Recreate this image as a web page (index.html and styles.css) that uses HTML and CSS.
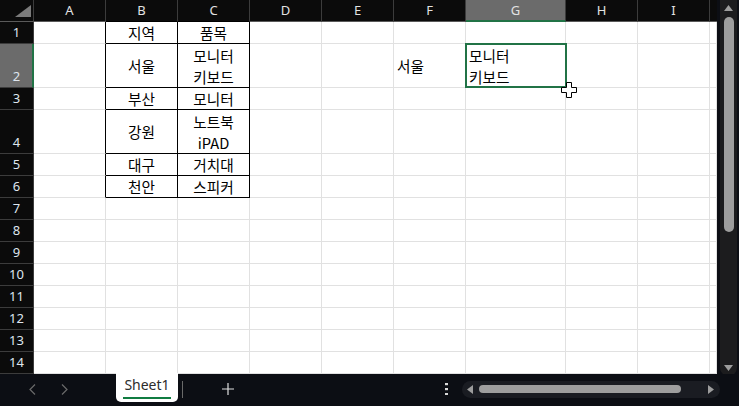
FILE: index.html
```html
<!DOCTYPE html>
<html lang="ko">
<head>
<meta charset="utf-8">
<title>Sheet1</title>
<link rel="stylesheet" href="styles.css">
</head>
<body>
<div class="app">
  <div class="top">
    <div class="sheet">
      <div class="hdr corner"><svg width="16" height="12" viewBox="0 0 16 12"><polygon points="16,0 16,12 0,12" fill="#7b7b7b"/></svg></div>
      <div class="hdr">A</div>
      <div class="hdr th">B</div>
      <div class="hdr th">C</div>
      <div class="hdr">D</div>
      <div class="hdr">E</div>
      <div class="hdr">F</div>
      <div class="hdr hsel">G</div>
      <div class="hdr">H</div>
      <div class="hdr">I</div>
      <div class="hdr last"></div>

      <div class="rh">1</div>
      <div class="c tl"></div><div class="c t">지역</div><div class="c t">품목</div><div class="c"></div><div class="c"></div><div class="c"></div><div class="c"></div><div class="c"></div><div class="c"></div><div class="c"></div>

      <div class="rh rsel">2</div>
      <div class="c tl"></div><div class="c t">서울</div><div class="c t wrap">모니터<br>키보드</div><div class="c"></div><div class="c"></div><div class="c left">서울</div><div class="c sel"><div class="seltext">모니터<br>키보드</div><span class="selbox"></span></div><div class="c"></div><div class="c"></div><div class="c"></div>

      <div class="rh">3</div>
      <div class="c tl"></div><div class="c t">부산</div><div class="c t">모니터</div><div class="c"></div><div class="c"></div><div class="c"></div><div class="c"></div><div class="c"></div><div class="c"></div><div class="c"></div>

      <div class="rh">4</div>
      <div class="c tl"></div><div class="c t">강원</div><div class="c t wrap">노트북<br>iPAD</div><div class="c"></div><div class="c"></div><div class="c"></div><div class="c"></div><div class="c"></div><div class="c"></div><div class="c"></div>

      <div class="rh">5</div>
      <div class="c tl"></div><div class="c t">대구</div><div class="c t">거치대</div><div class="c"></div><div class="c"></div><div class="c"></div><div class="c"></div><div class="c"></div><div class="c"></div><div class="c"></div>

      <div class="rh">6</div>
      <div class="c tl"></div><div class="c t">천안</div><div class="c t">스피커</div><div class="c"></div><div class="c"></div><div class="c"></div><div class="c"></div><div class="c"></div><div class="c"></div><div class="c"></div>

      <div class="rh">7</div>
      <div class="c"></div><div class="c"></div><div class="c"></div><div class="c"></div><div class="c"></div><div class="c"></div><div class="c"></div><div class="c"></div><div class="c"></div><div class="c"></div>
      <div class="rh">8</div>
      <div class="c"></div><div class="c"></div><div class="c"></div><div class="c"></div><div class="c"></div><div class="c"></div><div class="c"></div><div class="c"></div><div class="c"></div><div class="c"></div>
      <div class="rh">9</div>
      <div class="c"></div><div class="c"></div><div class="c"></div><div class="c"></div><div class="c"></div><div class="c"></div><div class="c"></div><div class="c"></div><div class="c"></div><div class="c"></div>
      <div class="rh">10</div>
      <div class="c"></div><div class="c"></div><div class="c"></div><div class="c"></div><div class="c"></div><div class="c"></div><div class="c"></div><div class="c"></div><div class="c"></div><div class="c"></div>
      <div class="rh">11</div>
      <div class="c"></div><div class="c"></div><div class="c"></div><div class="c"></div><div class="c"></div><div class="c"></div><div class="c"></div><div class="c"></div><div class="c"></div><div class="c"></div>
      <div class="rh">12</div>
      <div class="c"></div><div class="c"></div><div class="c"></div><div class="c"></div><div class="c"></div><div class="c"></div><div class="c"></div><div class="c"></div><div class="c"></div><div class="c"></div>
      <div class="rh">13</div>
      <div class="c"></div><div class="c"></div><div class="c"></div><div class="c"></div><div class="c"></div><div class="c"></div><div class="c"></div><div class="c"></div><div class="c"></div><div class="c"></div>
      <div class="rh">14</div>
      <div class="c"></div><div class="c"></div><div class="c"></div><div class="c"></div><div class="c"></div><div class="c"></div><div class="c"></div><div class="c"></div><div class="c"></div><div class="c"></div>

      <svg class="cursor" width="17" height="17" viewBox="0 0 17 17"><polygon points="5.5,0.5 10.5,0.5 10.5,5.5 15.5,5.5 15.5,10.5 10.5,10.5 10.5,15.5 5.5,15.5 5.5,10.5 0.5,10.5 0.5,5.5 5.5,5.5" fill="#fff" stroke="#000" stroke-width="1"/></svg>
    </div>
    <div class="vscroll">
      <div class="vtrack">
        <svg class="varrow" width="9" height="6" viewBox="0 0 9 6"><polygon points="4.5,0 9,6 0,6" fill="#9d9d9d"/></svg>
        <div class="vthumb"></div>
        <div class="grow"></div>
        <svg class="varrow" width="9" height="6" viewBox="0 0 9 6"><polygon points="0,0 9,0 4.5,6" fill="#9d9d9d"/></svg>
      </div>
    </div>
  </div>
  <div class="bottom">
    <div class="nav">
      <div class="navbtn"><svg width="7" height="11" viewBox="0 0 7 11"><polyline points="6,0.5 1,5.5 6,10.5" fill="none" stroke="#6a6a6a" stroke-width="1.2"/></svg></div>
      <div class="navbtn"><svg width="7" height="11" viewBox="0 0 7 11"><polyline points="1,0.5 6,5.5 1,10.5" fill="none" stroke="#6a6a6a" stroke-width="1.2"/></svg></div>
    </div>
    <div class="tab"><span class="tabtext">Sheet1</span></div>
    <div class="sep"></div>
    <div class="plus"><svg width="12" height="12" viewBox="0 0 12 12"><path d="M6 0V12M0 6H12" stroke="#e0e0e0" stroke-width="1.2"/></svg></div>
    <div class="grow"></div>
    <div class="dots"><svg width="3" height="12" viewBox="0 0 3 12"><rect x="0" y="0" width="3" height="2.2" fill="#d8d8d8"/><rect x="0" y="5" width="3" height="2.2" fill="#d8d8d8"/><rect x="0" y="10" width="3" height="2" fill="#d8d8d8"/></svg></div>
    <div class="hscroll">
      <svg width="6" height="9" viewBox="0 0 6 9"><polygon points="6,0 6,9 0,4.5" fill="#9d9d9d"/></svg>
      <div class="hthumb"></div>
      <div class="grow"></div>
      <svg width="6" height="9" viewBox="0 0 6 9"><polygon points="0,0 6,4.5 0,9" fill="#9d9d9d"/></svg>
    </div>
  </div>
</div>
</body>
</html>
```
FILE: styles.css
```css
* { box-sizing: border-box; }
html, body { margin: 0; padding: 0; }
body {
  width: 739px;
  height: 406px;
  overflow: hidden;
  background: #0c0e14;
  font-family: "Noto Sans CJK KR", "Noto Sans", sans-serif;
}
.app {
  display: flex;
  flex-direction: column;
  height: 406px;
}
.top {
  display: flex;
  height: 374px;
}
.sheet {
  position: relative;
  width: 717px;
  display: grid;
  grid-template-columns: 34px repeat(6, 72px) 100px 72px 72px 7px;
  grid-template-rows: 22px 22px 44px 22px 44px repeat(9, 22px);
  background: #fff;
  overflow: hidden;
}
.hdr {
  background: #0b0b0b;
  color: #e2e2e2;
  font-family: "Noto Sans", "Open Sans", sans-serif;
  font-size: 13px;
  display: flex;
  align-items: center;
  justify-content: center;
  border-right: 1px solid #3c3c3c;
  border-bottom: 1px solid #5a5a5a;
  padding-bottom: 1px;
}
.hdr.last { border-right: none; }
.corner {
  align-items: flex-start;
  justify-content: flex-end;
  padding: 5px 2px 0 0;
}
.corner svg { display: block; }
.hdr.th { border-bottom-color: #000; }
.hdr.hsel {
  background: #6b6b6b;
  border-bottom: 2px solid #217346;
  padding-bottom: 0;
}
.rh {
  background: #0b0b0b;
  color: #dfe6ee;
  font-family: "Noto Sans", "Open Sans", sans-serif;
  font-size: 13px;
  display: flex;
  align-items: flex-end;
  justify-content: center;
  padding-bottom: 2px;
  line-height: 18px;
  border-right: 1px solid #3c3c3c;
  border-bottom: 1px solid #3c3c3c;
}
.rh.rsel {
  background: #6b6b6b;
  border-right: 2px solid #217346;
  padding-left: 1px;
}
.c {
  background: #fff;
  border-right: 1px solid #e1e1e1;
  border-bottom: 1px solid #e1e1e1;
  font-size: 14.67px;
  line-height: 21px;
  color: #000;
  display: flex;
  align-items: center;
}
.c.tl { border-right-color: #000; }
.c.t {
  border-right-color: #000;
  border-bottom-color: #000;
  justify-content: center;
  text-align: center;
}
.c.left { padding-left: 3px; }
.c.sel {
  position: relative;
  padding-left: 3px;
}
.seltext { line-height: 21px; }
.selbox {
  position: absolute;
  left: -1px;
  top: -1px;
  right: -2px;
  bottom: -1px;
  border: 2px solid #217346;
}
.cursor {
  position: absolute;
  left: 561px;
  top: 82px;
}
.vscroll {
  width: 22px;
  padding: 0 2px 0 3px;
  background: #0c0e14;
}
.vtrack {
  height: 376px;
  background: #1c1c1e;
  border-radius: 0 0 9px 9px;
  display: flex;
  flex-direction: column;
  align-items: center;
  padding: 5px 0 5px;
}
.varrow { display: block; flex: none; }
.vthumb {
  margin-top: 6px;
  width: 10px;
  height: 215px;
  border-radius: 5px;
  background: #9e9e9e;
}
.grow { flex: 1; }
.bottom {
  height: 32px;
  display: flex;
  align-items: center;
  padding-bottom: 2px;
  background: #0c0e14;
  position: relative;
}
.nav {
  width: 116px;
  padding-left: 16px;
  display: flex;
}
.navbtn {
  width: 32px;
  display: flex;
  justify-content: center;
  align-items: center;
}
.navbtn svg, .plus svg, .dots svg { display: block; }
.tab {
  align-self: flex-start;
  margin-top: -1px;
  width: 62px;
  height: 29px;
  background: #fff;
  border-radius: 0 0 5px 5px;
  display: flex;
  justify-content: center;
  padding-top: 2px;
}
.tabtext {
  font-family: "Noto Sans", "Open Sans", sans-serif;
  font-size: 14px;
  color: #2c2c2c;
  line-height: 20px;
  height: 24px;
  border-bottom: 2.5px solid #107c41;
  padding: 0 1px;
}
.sep {
  margin-left: 4px;
  width: 1px;
  height: 17px;
  background: #6a6a6a;
}
.plus {
  margin-left: 29px;
  width: 32px;
  display: flex;
  justify-content: center;
}
.dots {
  width: 16px;
  display: flex;
  justify-content: center;
}
.hscroll {
  margin-left: 8px;
  margin-right: 19px;
  width: 258px;
  height: 17px;
  border-radius: 9px;
  background: #1a1c22;
  display: flex;
  align-items: center;
  padding: 0 6px 0 5px;
}
.hscroll svg { display: block; flex: none; }
.hthumb {
  margin-left: 6px;
  width: 202px;
  height: 8px;
  border-radius: 4px;
  background: #9e9e9e;
}
```
